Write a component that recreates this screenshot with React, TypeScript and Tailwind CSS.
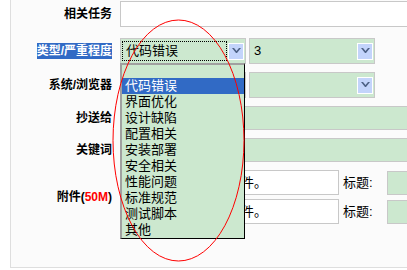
import React from 'react';

const font = { fontFamily: '"Liberation Sans", "Noto Sans CJK SC", sans-serif' };

const options = ['代码错误', '界面优化', '设计缺陷', '配置相关', '安装部署', '安全相关', '性能问题', '标准规范', '测试脚本', '其他'];

const ArrowButton: React.FC = () => (
  <div className="w-[16px] h-[17px] border border-white bg-[#c3d4fb] flex items-center justify-center shrink-0">
    <svg width="9" height="6" viewBox="0 0 9 6">
      <path d="M0 0h2l2.5 3L7 0h2L5 5H4z" fill="#4d6185" />
    </svg>
  </div>
);

const SelectBox: React.FC<{ value?: string; focused?: boolean }> = ({ value, focused }) => (
  <div className="w-[126px] h-[26px] border border-[#c8c8c8] bg-[#cce8cf] flex items-center pl-[1px] pr-[1px] shrink-0">
    <div className={`flex-1 h-[20px] flex items-center pl-[3px] text-[13px] text-black ${focused ? 'border border-dotted border-black' : ''}`}>
      {value}
    </div>
    <div className="ml-[1px]">
      <ArrowButton />
    </div>
  </div>
);

const Label: React.FC<{ children: React.ReactNode }> = ({ children }) => (
  <div className="w-[101px] shrink-0 text-right text-[12px] font-bold text-black leading-[15px]">{children}</div>
);

const App: React.FC = () => {
  return (
    <div className="relative w-[407px] h-[270px] bg-white overflow-hidden" style={font}>
      <div className="ml-[10px] h-[268px] border-l border-b border-[#dedede] bg-[#fbfbfb] flex flex-col">
        {/* 相关任务 */}
        <div className="flex items-center mt-[1px] h-[26px]">
          <Label>相关任务</Label>
          <div className="ml-[8px] w-[300px] h-[26px] border border-[#c8c8c8] bg-white shrink-0" />
        </div>

        {/* 类型/严重程度 */}
        <div className="flex items-center mt-[11px] h-[26px]">
          <Label>
            <span className="bg-[#316ac5] text-white py-[1px]">类型/严重程度</span>
          </Label>
          <div className="ml-[8px] flex gap-[3px]">
            <SelectBox value="代码错误" focused />
            <SelectBox value="3" />
          </div>
        </div>

        {/* 系统/浏览器 */}
        <div className="flex items-center mt-[8px] h-[26px]">
          <Label>系统/浏览器</Label>
          <div className="ml-[8px] flex gap-[3px]">
            <SelectBox />
            <SelectBox />
          </div>
        </div>

        {/* 抄送给 */}
        <div className="flex items-center mt-[8px] h-[24px]">
          <Label>抄送给</Label>
          <div className="ml-[8px] w-[300px] h-[24px] border border-[#c8c8c8] bg-[#cce8cf] shrink-0" />
        </div>

        {/* 关键词 */}
        <div className="flex items-center mt-[8px] h-[24px]">
          <Label>关键词</Label>
          <div className="ml-[8px] w-[300px] h-[24px] border border-[#c8c8c8] bg-[#cce8cf] shrink-0" />
        </div>

        {/* 附件 */}
        <div className="flex items-center mt-[8px]">
          <Label>
            附件(<span className="text-[#ff0000]">50M</span>)
          </Label>
          <div className="ml-[8px] flex flex-col gap-[4px]">
            {[0, 1].map(i => (
              <div key={i} className="flex items-center">
                <div className="w-[219px] h-[25px] border border-[#c8c8c8] bg-white flex items-center pl-[3px] text-[13px] text-black overflow-hidden whitespace-nowrap shrink-0">
                  请在此处选择上传文件。
                </div>
                <span className="ml-[4px] w-[44px] text-[13px] text-black shrink-0">标题:</span>
                <div className="w-[60px] h-[24px] border border-[#c8c8c8] bg-[#cce8cf] shrink-0" />
              </div>
            ))}
          </div>
        </div>
      </div>

      {/* open dropdown list */}
      <div className="absolute left-[120px] top-[63px] w-[125px] h-[176px] bg-[#cce8cf] border-l-2 border-t-2 border-l-[#a0a0a0] border-t-[#a0a0a0] border-r border-b border-r-black border-b-black">
        <div className="h-[13px]" />
        {options.map((o, i) => (
          <div
            key={o}
            className={`h-[16px] pl-[3px] text-[13px] leading-[16px] ${i === 0 ? 'bg-[#316ac5] text-white' : 'text-black'}`}
          >
            {o}
          </div>
        ))}
      </div>

      {/* red annotation */}
      <svg className="absolute left-0 top-0 pointer-events-none" width="407" height="270">
        <ellipse cx="178.5" cy="140.5" rx="65.5" ry="120.5" fill="none" stroke="#ff0000" strokeWidth="1" />
      </svg>
    </div>
  );
};

export default App;
